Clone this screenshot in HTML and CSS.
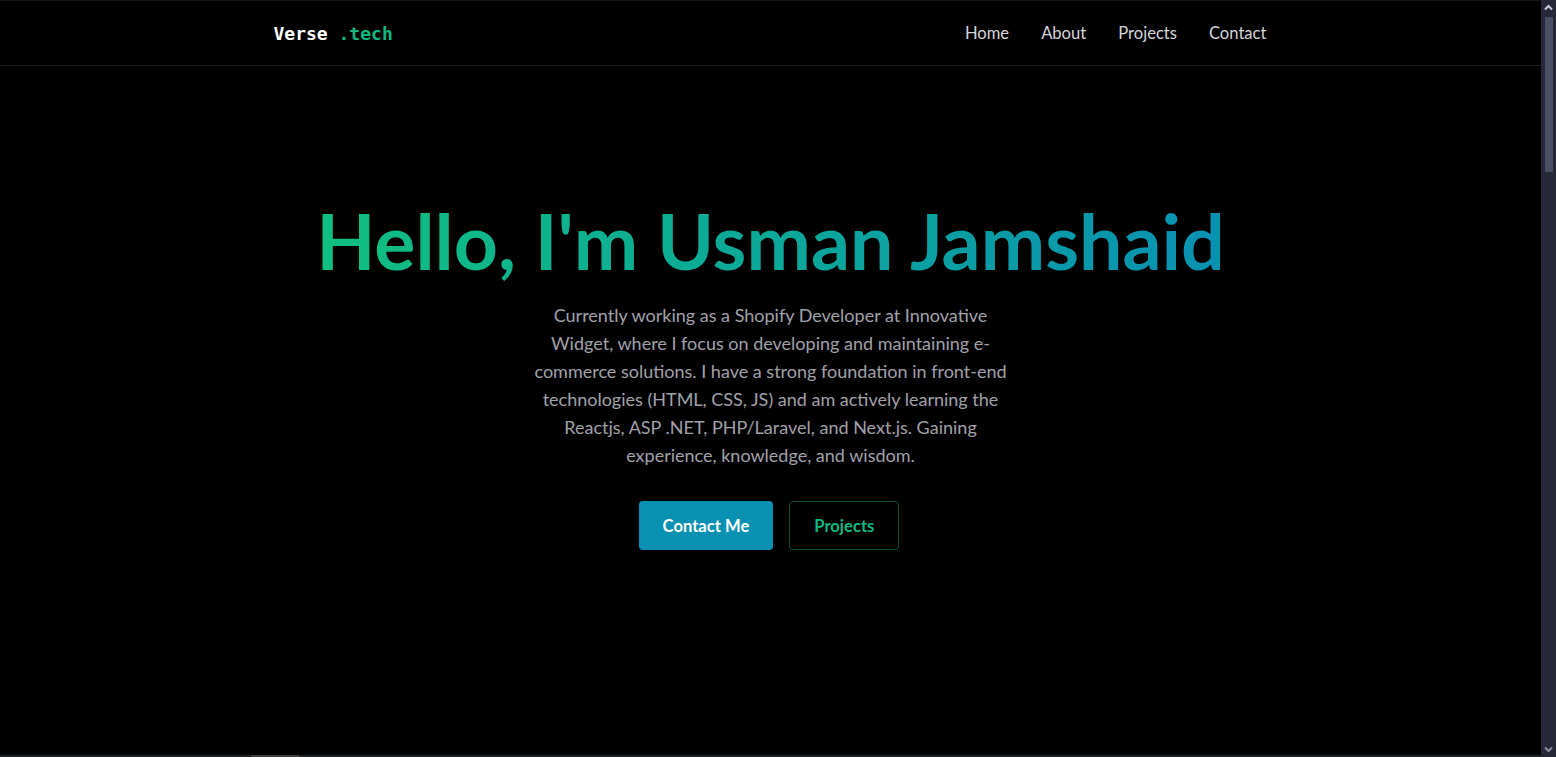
FILE: index.html
```html
<!DOCTYPE html>
<html lang="en">
<head>
<meta charset="utf-8">
<title>Verse .tech</title>
<link rel="stylesheet" href="styles.css">
</head>
<body>
<div class="window">
  <div class="page">
    <header class="navbar">
      <div class="container nav-inner">
        <a class="logo" href="#"><span class="logo-main">Verse</span> <span class="logo-accent">.tech</span></a>
        <nav class="nav-links">
          <a href="#">Home</a>
          <a href="#">About</a>
          <a href="#">Projects</a>
          <a href="#">Contact</a>
        </nav>
      </div>
    </header>
    <main class="hero">
      <h1 class="hero-title">Hello, I'm Usman Jamshaid</h1>
      <p class="hero-text">Currently working as a Shopify Developer at Innovative Widget, where I focus on developing and maintaining e-commerce solutions. I have a strong foundation in front-end technologies (HTML, CSS, JS) and am actively learning the Reactjs, ASP .NET, PHP/Laravel, and Next.js. Gaining experience, knowledge, and wisdom.</p>
      <div class="hero-actions">
        <a class="btn btn-primary" href="#">Contact Me</a>
        <a class="btn btn-outline" href="#">Projects</a>
      </div>
    </main>
    <div class="hscroll"><div class="hscroll-thumb"></div></div>
  </div>
  <aside class="vscroll">
    <svg class="vscroll-arrow" width="15" height="15" viewBox="0 0 15 15"><path d="M4 9.5 L7.5 6 L11 9.5" fill="none" stroke="#c9ccd6" stroke-width="2"/></svg>
    <div class="vscroll-thumb"></div>
    <div class="vscroll-space"></div>
    <svg class="vscroll-arrow" width="15" height="15" viewBox="0 0 15 15"><path d="M4 5.5 L7.5 9 L11 5.5" fill="none" stroke="#8a8ea0" stroke-width="2"/></svg>
  </aside>
</div>
</body>
</html>
```

FILE: styles.css
```css
html, body { background: #000; }
body {
  margin: 0;
  overflow: hidden;
  color: #d1d5db;
  font-family: "Lato", "Open Sans", sans-serif;
}
a { text-decoration: none; color: inherit; }

.window {
  display: flex;
  height: 757px;
}
.page {
  flex: 1;
  display: flex;
  flex-direction: column;
  min-width: 0;
}
.container {
  max-width: 1024px;
  width: 100%;
  margin: 0 auto;
  padding: 0 16px;
  box-sizing: border-box;
}
.navbar {
  border-top: 1px solid #141414;
  border-bottom: 1px solid #1c1c1c;
}
.nav-inner {
  height: 64px;
  display: flex;
  align-items: center;
  justify-content: space-between;
}
.logo {
  font-family: "DejaVu Sans Mono", "Liberation Mono", monospace;
  font-size: 18px;
  font-weight: bold;
  white-space: pre;
  margin-left: -1px;
}
.logo-main { color: #fff; }
.logo-accent { color: #10b981; }
.nav-links {
  display: flex;
  gap: 32px;
  font-size: 16.6px;
  color: #d4d4d8;
}
.hero {
  flex: 1;
  display: flex;
  flex-direction: column;
  align-items: center;
  text-align: center;
  padding-top: 128px;
}
.hero-title {
  margin: 0;
  font-size: 77px;
  font-weight: 700;
  line-height: 1.2;
  background: linear-gradient(90deg, #10bf80, #0891b2);
  -webkit-background-clip: text;
  background-clip: text;
  color: transparent;
}
.hero-text {
  margin: 15px 0 0;
  max-width: 488px;
  font-size: 18px;
  line-height: 28px;
  color: #a1a1aa;
}
.hero-actions {
  display: flex;
  gap: 16px;
  margin-top: 32px;
  margin-left: -3px;
}
.btn {
  display: inline-flex;
  align-items: center;
  justify-content: center;
  height: 49px;
  padding: 0 24px;
  border-radius: 4px;
  font-size: 16.6px;
  font-weight: 700;
  box-sizing: border-box;
}
.btn-primary { background: #0891b2; color: #fff; }
.btn-outline { border: 1px solid #064e3b; color: #10b981; }

.hscroll {
  height: 2px;
  background: #1e2327;
  display: flex;
}
.hscroll-thumb {
  width: 48px;
  margin-left: 251px;
  background: #3a3f44;
}
.vscroll {
  width: 15px;
  background: #262838;
  display: flex;
  flex-direction: column;
  align-items: center;
}
.vscroll-arrow { flex: none; }
.vscroll-thumb {
  width: 8px;
  height: 155px;
  margin-top: 2px;
  background: #4a4f66;
  border-radius: 1px;
}
.vscroll-space { flex: 1; }
```
